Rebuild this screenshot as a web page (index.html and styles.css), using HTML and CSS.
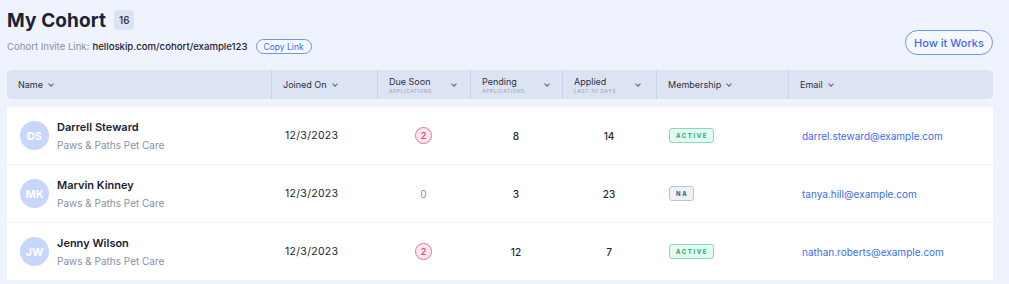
FILE: index.html
```html
<!DOCTYPE html>
<html lang="en">
<head>
    <meta charset="UTF-8">
    <meta name="viewport" content="width=device-width, initial-scale=1.0">
    <title>My Cohort</title>
    <link rel="stylesheet" href="styles.css">
</head>
<body>

<div class="page">
    <div class="top">
        <div class="heading">
            <div class="titleRow">
                <h1>My Cohort</h1>
                <span class="count">16</span>
            </div>
            <div class="invite">
                <span class="inviteLabel">Cohort Invite Link:</span>
                <span class="inviteUrl">helloskip.com/cohort/example123</span>
                <button class="copyBtn">Copy Link</button>
            </div>
        </div>
        <button class="howBtn">How it Works</button>
    </div>

    <!-- table header -->
    <div class="grid head">
        <div class="th">Name <span class="chev"></span></div>
        <div class="th">Joined On <span class="chev"></span></div>
        <div class="th"><div>Due Soon<small>Applications</small></div><span class="chev"></span></div>
        <div class="th"><div>Pending<small>Applications</small></div><span class="chev"></span></div>
        <div class="th"><div>Applied<small>Last 30 days</small></div><span class="chev"></span></div>
        <div class="th">Membership <span class="chev"></span></div>
        <div class="th">Email <span class="chev"></span></div>
    </div>

    <div class="rows">
        <div class="grid row">
            <div class="td person">
                <div class="avatar">DS</div>
                <div>
                    <div class="name">Darrell Steward</div>
                    <div class="company">Paws &amp; Paths Pet Care</div>
                </div>
            </div>
            <div class="td date">12/3/2023</div>
            <div class="td center"><span class="due">2</span></div>
            <div class="td center">8</div>
            <div class="td center">14</div>
            <div class="td"><span class="tag active">Active</span></div>
            <div class="td email">darrel.steward@example.com</div>
        </div>
        <div class="grid row">
            <div class="td person">
                <div class="avatar">MK</div>
                <div>
                    <div class="name">Marvin Kinney</div>
                    <div class="company">Paws &amp; Paths Pet Care</div>
                </div>
            </div>
            <div class="td date">12/3/2023</div>
            <div class="td center zero">0</div>
            <div class="td center">3</div>
            <div class="td center">23</div>
            <div class="td"><span class="tag na">NA</span></div>
            <div class="td email">tanya.hill@example.com</div>
        </div>
        <div class="grid row">
            <div class="td person">
                <div class="avatar">JW</div>
                <div>
                    <div class="name">Jenny Wilson</div>
                    <div class="company">Paws &amp; Paths Pet Care</div>
                </div>
            </div>
            <div class="td date">12/3/2023</div>
            <div class="td center"><span class="due">2</span></div>
            <div class="td center">12</div>
            <div class="td center">7</div>
            <div class="td"><span class="tag active">Active</span></div>
            <div class="td email">nathan.roberts@example.com</div>
        </div>
    </div>
</div>

</body>
</html>
```

FILE: styles.css
```css
body {
    margin: 0;
    background: #eff3fd;
    font-family: Inter, "Noto Sans", sans-serif;
    color: #1d2333;
    height: 284px;
    overflow: hidden;
}

.page {
    padding: 7px 16px 0 7px;
}

.top {
    display: flex;
    justify-content: space-between;
    align-items: flex-start;
    height: 63px;
}

.titleRow {
    display: flex;
    align-items: center;
    gap: 8px;
    height: 26px;
}

h1 {
    margin: 0;
    font-size: 19px;
    font-weight: 700;
    color: #1b2233;
    letter-spacing: 0.1px;
}

.count {
    background: #dde3ef;
    border-radius: 4px;
    font-size: 10px;
    font-weight: 500;
    padding: 4px 5px;
    color: #2b3142;
}

.invite {
    display: flex;
    align-items: center;
    margin-top: 6px;
    font-size: 9.6px;
    gap: 3px;
}

.inviteLabel {
    color: #8a90a3;
}

.inviteUrl {
    color: #1d2333;
    font-weight: 500;
}

.copyBtn {
    margin-left: 5px;
    font-family: inherit;
    font-size: 8.5px;
    color: #3d6cf0;
    background: #f5f8ff;
    border: 1px solid #6d93f5;
    border-radius: 8px;
    padding: 2px 7px;
    height: 15px;
}

.howBtn {
    font-family: inherit;
    font-size: 11px;
    font-weight: 500;
    color: #3d6cf0;
    background: #f5f8ff;
    border: 1px solid #6d93f5;
    border-radius: 13px;
    width: 88px;
    height: 25px;
    margin-top: 23px;
}

.grid {
    display: grid;
    grid-template-columns: 264px 106px 93px 92px 94px 132px 205px;
}

.head {
    background: #dce3f3;
    border-radius: 5px;
    height: 29px;
}

.th {
    display: flex;
    align-items: center;
    gap: 6px;
    padding-left: 11px;
    font-size: 9px;
    font-weight: 400;
    color: #2b3142;
    border-left: 1px solid #c9d2e6;
}

.th:first-child {
    border-left: none;
}

.th small {
    display: block;
    font-size: 5px;
    letter-spacing: 0.6px;
    text-transform: uppercase;
    color: #9aa2b6;
    margin-top: 1px;
}

.th div + .chev {
    margin-left: 14px;
}

.chev {
    width: 3px;
    height: 3px;
    border-right: 1px solid #5a6175;
    border-bottom: 1px solid #5a6175;
    transform: rotate(45deg);
    margin-top: -2px;
}

.rows {
    margin-top: 8px;
    background: #fff;
}

.row {
    height: 58px;
    border-bottom: 1px solid #eef1f8;
    box-sizing: border-box;
}

.td {
    display: flex;
    align-items: center;
    padding-left: 14px;
    font-size: 10px;
    font-weight: 500;
    color: #1d2333;
}

.date {
    font-weight: 400;
    font-size: 10.5px;
    letter-spacing: 0.3px;
}

.center {
    justify-content: center;
    padding-left: 0;
}

.zero {
    color: #8a90a3;
    font-weight: 400;
}

.person {
    padding-left: 13px;
    gap: 8px;
}

.avatar {
    width: 29px;
    height: 29px;
    border-radius: 50%;
    background: #c7d6fb;
    color: #fff;
    font-size: 11px;
    font-weight: 700;
    display: flex;
    align-items: center;
    justify-content: center;
}

.name {
    font-size: 11px;
    font-weight: 600;
    color: #1b2233;
}

.company {
    margin-top: 5px;
    font-size: 10px;
    font-weight: 400;
    color: #8a90a3;
}

.due {
    width: 15px;
    height: 15px;
    border-radius: 50%;
    border: 1px solid #f06a9a;
    background: #ffe9f1;
    color: #ec3f7d;
    font-size: 9.5px;
    display: flex;
    align-items: center;
    justify-content: center;
}

.tag {
    font-size: 6px;
    font-weight: 700;
    letter-spacing: 1.6px;
    text-transform: uppercase;
    border-radius: 3px;
    padding: 3px 5px 3px 6px;
    margin-left: -1px;
}

.active {
    color: #17a76d;
    background: #e5faf1;
    border: 1px solid #7fdcb4;
}

.na {
    color: #4a5166;
    background: #eef1f8;
    border: 1px solid #bcc4d8;
}

.email {
    color: #3d6cf0;
    font-weight: 400;
}
```
